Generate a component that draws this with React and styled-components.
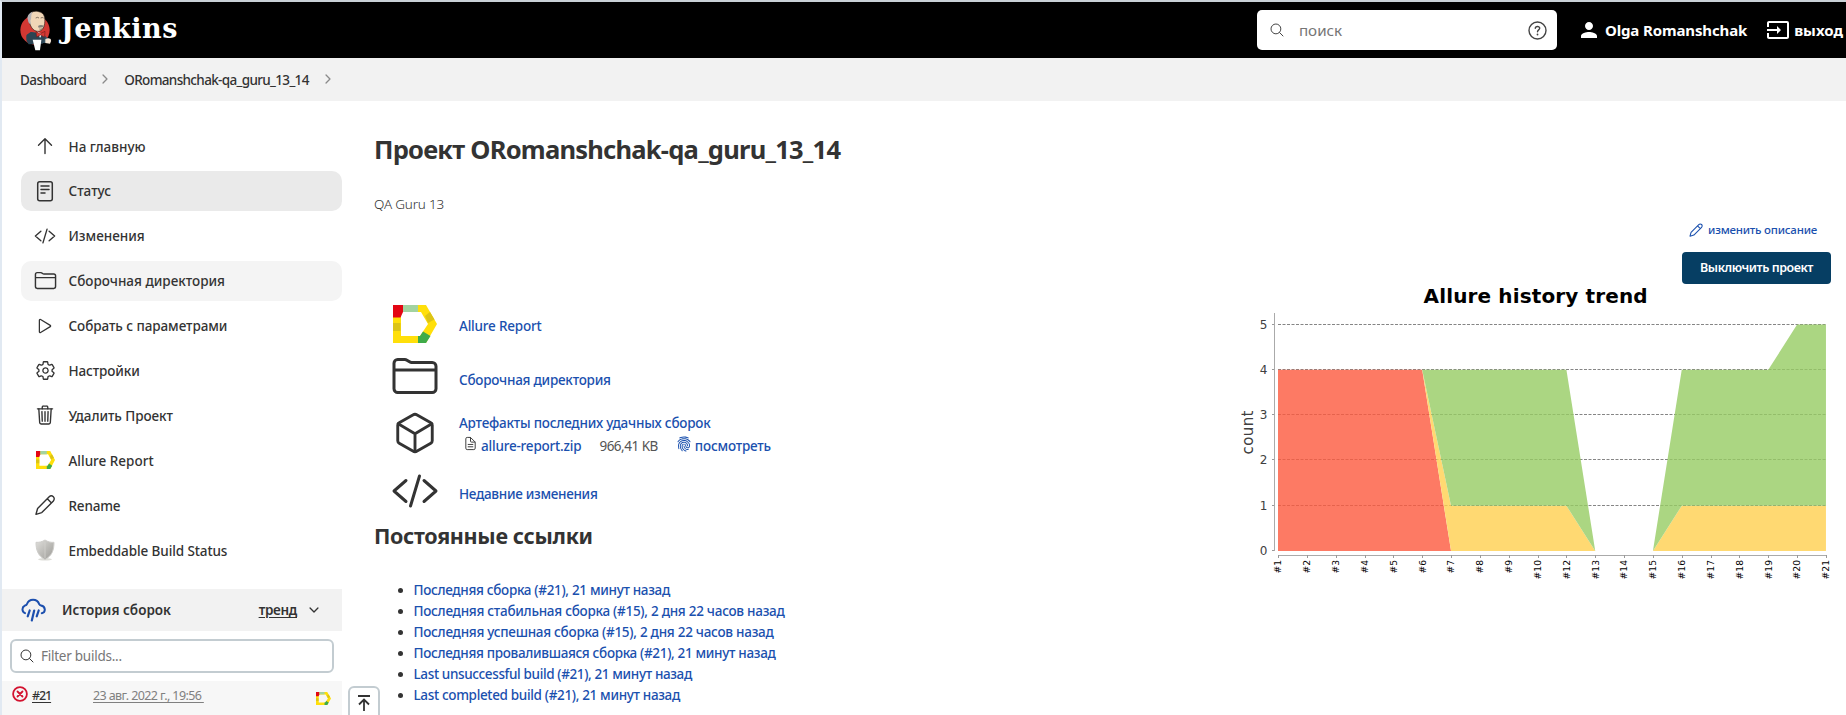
import React from 'react';
import styled, { createGlobalStyle } from 'styled-components';
import {
  IoCodeSlashOutline, IoFolderOutline, IoPlayOutline, IoSettingsOutline,
  IoTrashOutline, IoCubeOutline, IoFingerPrint, IoDocumentTextOutline,
  IoSearchOutline, IoChevronForwardOutline, IoChevronDownOutline,
} from 'react-icons/io5';
import { MdPerson, MdInput } from 'react-icons/md';

const GlobalStyle = createGlobalStyle`
  *, *::before, *::after { box-sizing: border-box; }
  body { margin: 0; background: #fff; }
`;

const Page = styled.div`
  height: 715px;
  overflow: hidden;
  border-top: 2px solid #c9d0d6;
  border-left: 2px solid #e1e9f2;
  background: #fff;
  color: #333;
  font: 470 13.5px/20px "Noto Sans", "Open Sans", sans-serif;
  white-space: nowrap;
  svg { display: block; flex: none; }
`;

const Header = styled.header`
  height: 56px;
  display: flex;
  align-items: center;
  background: #000;
  color: #fff;
`;
const Brand = styled.a`
  display: flex;
  align-items: center;
  margin-left: 18px;
  gap: 9px;
`;
const BrandName = styled.span`
  font: 700 27px/40px "DejaVu Serif", serif;
  letter-spacing: 0.5px;
  margin-top: -2px;
`;
const SearchBox = styled.div`
  display: flex;
  align-items: center;
  width: 300px;
  height: 40px;
  margin-left: auto;
  padding: 0 10px 0 12px;
  border-radius: 5px;
  background: #fff;
  color: #444;
`;
const SearchHint = styled.span`
  margin: 0 auto 0 14px;
  color: #757575;
  font-size: 15.2px;
  font-weight: 400;
`;
const AccountLink = styled.a`
  display: flex;
  align-items: center;
  gap: ${(p) => p.$gap}px;
  margin-left: ${(p) => p.$left}px;
  font-size: 15px;
  font-weight: 700;
  letter-spacing: ${(p) => p.$track || 0}px;
  &:last-child { margin-right: 3px; }
`;

const Breadcrumbs = styled.nav`
  display: flex;
  align-items: center;
  height: 43px;
  padding: 1px 0 0 18px;
  background: #f2f2f2;
  color: #333;
  svg { color: #8a8a8a; margin: -3px 0 0; }
`;
const Crumb = styled.a`
  letter-spacing: ${(p) => p.$track}px;
  margin-right: 12px;
  svg + & { margin-left: 12px; }
`;

const Columns = styled.div`
  display: flex;
  align-items: flex-start;
`;
const Sidebar = styled.aside`
  width: 340px;
  flex: none;
  padding-top: 25px;
`;
const Tasks = styled.div`
  display: flex;
  flex-direction: column;
  gap: 4.9px;
  padding-left: 19px;
  height: 463px;
`;
const Task = styled.a`
  display: flex;
  align-items: center;
  height: 40px;
  flex: none;
  padding-left: 14px;
  gap: 13.5px;
  border-radius: 10px;
  background: ${(p) => p.$bg || 'transparent'};
  letter-spacing: ${(p) => p.$track || 0}px;
  span { padding-top: 1px; }
`;
const IconSlot = styled.i`
  display: flex;
  justify-content: center;
  width: 20px;
`;
const HistoryHeader = styled.div`
  display: flex;
  align-items: center;
  height: 42px;
  padding: 0 21px 0 19px;
  background: #f2f2f2;
  font-weight: 650;
  svg:first-child { margin-right: 16px; }
`;
const TrendLink = styled.a`
  margin: 0 10px 0 auto;
  letter-spacing: -0.3px;
  text-decoration: underline;
  text-underline-offset: 2px;
`;
const Filter = styled.div`
  display: flex;
  align-items: center;
  gap: 6px;
  height: 34px;
  margin: 8px 8px 8px;
  padding-left: 7px;
  border: 2px solid #c3ccd1;
  border-radius: 6px;
`;
const FilterHint = styled.span`
  color: #777;
  font-weight: 400;
  letter-spacing: -0.25px;
`;
const Build = styled.div`
  display: flex;
  align-items: flex-start;
  height: 36px;
  padding: 5px 0 0 10px;
  background: #f7f7f7;
  font-size: 12.5px;
  svg:last-child { margin: 6px 11px 0 auto; }
`;
const BuildNumber = styled.a`
  width: 61px;
  line-height: 20px;
  margin: 0 0 0 4px;
  letter-spacing: -1.1px;
  text-decoration: underline;
  text-underline-offset: 2px;
`;
const BuildDate = styled(BuildNumber)`
  width: auto;
  margin-left: 0;
  color: #808080;
  font-weight: 400;
  letter-spacing: -0.62px;
`;

const TopButton = styled.button`
  display: flex;
  justify-content: center;
  width: 32px;
  height: 40px;
  flex: none;
  margin: 585px 0 0 6px;
  padding: 6px 0 0;
  border: 2px solid #c3ccd1;
  border-radius: 6px;
  background: #fff;
  color: #333;
`;

const Main = styled.main`
  flex: 1;
  margin-left: -6px;
  padding: 28px 13px 0 0;
`;
const Title = styled.h1`
  margin: 0;
  font-size: 25.5px;
  font-weight: 680;
  line-height: 40px;
  letter-spacing: -0.76px;
`;
const Description = styled.div`
  margin-top: 25px;
  font-weight: 350;
  letter-spacing: -0.2px;
`;
const EditRow = styled.div`
  display: flex;
  justify-content: flex-end;
  align-items: center;
  gap: 4px;
  height: 20px;
  margin: 6px 16px 12px 0;
  color: #1a50ae;
  font-size: 11.5px;
  letter-spacing: -0.22px;
`;
const Body = styled.div`
  display: flex;
  justify-content: space-between;
  align-items: flex-start;
`;
const Overview = styled.div`
  padding-top: 48px;
`;
const Entry = styled.div`
  display: flex;
  align-items: center;
  height: ${(p) => p.$height}px;
  padding-left: 18px;
  gap: 21px;
`;
const EntryIcon = styled.div`
  display: flex;
  justify-content: center;
  width: 46px;
  margin-top: -2px;
`;
const EntryText = styled.div`
  padding-top: ${(p) => p.$drop || 0}px;
  letter-spacing: ${(p) => p.$track || 0}px;
`;
const Link = styled.a`
  color: #1a50ae;
  font-weight: 500;
  letter-spacing: ${(p) => (p.$track === undefined ? 'inherit' : `${p.$track}px`)};
`;
const Artifact = styled.div`
  display: flex;
  align-items: center;
  height: 23px;
  padding: 3px 0 0 4px;
  svg { margin: -4px 3px 0 0; }
`;
const FileSize = styled.span`
  margin: 0 18px;
  color: #555;
  font-weight: 380;
  letter-spacing: -0.5px;
`;
const Subtitle = styled.h2`
  margin: 0;
  font-size: 21.5px;
  font-weight: 680;
  line-height: 32px;
  letter-spacing: -0.33px;
`;
const Permalinks = styled.ul`
  margin: 28px 0 0;
  padding-left: 39.5px;
  line-height: 21px;
`;

const Aside = styled.div`
  display: flex;
  flex-direction: column;
  align-items: flex-end;
`;
const PrimaryButton = styled.button`
  width: 149px;
  height: 32px;
  margin-right: 2px;
  padding: 0;
  border: 0;
  border-radius: 4px;
  background: #063e63;
  color: #fff;
  font: 650 12.5px/32px "Noto Sans", sans-serif;
  letter-spacing: -0.45px;
`;
const Chart = styled.svg`
  width: 600px;
  height: 310px;
  margin: -1px -7px 0 0;
  font-family: "DejaVu Sans", sans-serif;
`;

const AllureLogo = ({ width, height }) => (
  <svg width={width} height={height} viewBox="0 0 44 38" preserveAspectRatio="none">
    <path fill="#ffdf0a" d="M0 0H33L44 19 33 38H0ZM8 7V31H27L35 19 28 7Z" fillRule="evenodd" />
    <path fill="#e30613" d="M0 0H10V7L7.5 12.5H0Z" />
    <path fill="#a3d3a0" d="M10 0H25V7H10Z" />
    <path fill="#dcc416" d="M32 11 37 7 41.5 14.500 35 18ZM0 18H7.500V26H0Z" />
    <path fill="#3fab49" d="M25 38V31L27 31 30 26.500 37.500 31 33 38Z" />
  </svg>
);

const UpIcon = () => (
  <svg width="20" height="20" viewBox="0 0 20 20" fill="none" stroke="#333" strokeWidth="1.400" strokeLinecap="round" strokeLinejoin="round">
    <path d="M10 17.500V3M3.500 9.200 10 2.700 16.500 9.200" />
  </svg>
);

const StatusIcon = () => (
  <svg width="24" height="24" viewBox="0 0 24 24" fill="none" stroke="#333" strokeWidth="1.5" strokeLinecap="round">
    <rect x="4.700" y="2.700" width="14.600" height="19" rx="2" />
    <path d="M8 7h8M8 10.500h8M8 14h4" />
  </svg>
);

const PencilIcon = ({ size, color = '#333', weight = 1.4 }) => (
  <svg width={size} height={size} viewBox="0 0 24 24" fill="none" stroke={color} strokeWidth={weight} strokeLinejoin="round">
    <path d="M3 21.300 4.600 15.500 16.200 3.800A2.900 2.900 0 0 1 20.400 7.900L8.800 19.600ZM14.300 5.700l4.200 4.200" />
  </svg>
);

const RainIcon = () => (
  <svg width="25" height="25" viewBox="0 0 25 25" fill="none" stroke="#1c4fae" strokeWidth="2" strokeLinecap="round">
    <path d="M4 15.200A4.200 4.200 0 0 1 3.800 7.600C5 7.300 5.600 7.200 6 6 8 .6 16 .2 18.300 6.300 18.600 7.200 19 7.400 20 7.500 24.800 8.300 25 14.300 20.800 15.200" />
    <path d="M8.700 12.500 6.700 18.300M13.200 12.500 10.800 22.500M17.700 12.500 15.700 18.300" strokeWidth="2.200" />
  </svg>
);

const ShieldIcon = () => (
  <svg width="24" height="24" viewBox="0 0 24 24">
    <defs>
      <linearGradient id="metal" x1="0" x2="1" y1="0" y2="1">
        <stop offset="0" stopColor="#e0dfdc" />
        <stop offset="0.5" stopColor="#bdbcb8" />
        <stop offset="1" stopColor="#9b9a96" />
      </linearGradient>
    </defs>
    <ellipse cx="12" cy="21.300" rx="7" ry="1.200" fill="#deded9" />
    <path d="M12 2C9 4 6 4.500 3 4.300 3 12 5 18 12 21.500 19 18 21 12 21 4.300 18 4.500 15 4 12 2Z" fill="url(#metal)" stroke="#cfcecb" />
    <path d="M12 4V20" stroke="#d3d2ce" strokeWidth="0.800" />
  </svg>
);

const Butler = () => (
  <svg width="32" height="43" viewBox="30 25 96 129">
    <ellipse cx="75" cy="88" rx="44" ry="44" fill="#d33833" />
    <path d="M50 103 64 94 100 100 112 112 120 116 114 126 90 128 64 130 50 122Z" fill="#335061" />
    <path d="M50 103Q46 118 56 131L98 129 104 112 84 98 62 94Z" fill="#2c4453" />
    <path d="M56 56C54 36 72 28 86 33 104 36 106 52 104 68 102 84 94 92 84 92 68 92 60 76 56 56Z" fill="#f0d6b7" stroke="#30251f" strokeWidth="2" />
    <path d="M54 58C49 48 57 36 68 33 61 44 66 52 61 60L63 70C57 70 54 64 54 58Z" fill="#b5b3b6" />
    <path d="M77 52q6-4 10 0M92 52q5-3 9 0M88 85q5 2 9-1" fill="none" stroke="#4d4138" strokeWidth="2" />
    <path d="M84 76q8-6 19 0l-5 4-12 1Z" fill="#85827c" />
    <path d="M82 92 96 101 90 112Z" fill="#fff" />
    <path d="M78 93 91 99 105 92 104 110 92 103 80 109Z" fill="#d33833" stroke="#5d1715" strokeWidth="1.500" />
    <path d="M68 117 94 117 90 149 76 149Z" fill="#fff" />
    <path d="M106 116q8-6 16-1 4 6-2 14l-14-2Z" fill="#f4e4d3" />
  </svg>
);

const HelpIcon = () => (
  <svg width="19" height="19" viewBox="0 0 19 19" fill="none" stroke="#444" strokeWidth="1.400" strokeLinecap="round">
    <circle cx="9.500" cy="9.500" r="8.500" />
    <path d="M7.300 7.300C7.400 4.800 11.800 4.900 11.700 7.300 11.600 8.900 9.500 8.900 9.500 10.800" />
    <path d="M9.500 13.500v.1" strokeWidth="1.800" />
  </svg>
);

const FailedIcon = () => (
  <svg width="16" height="16" viewBox="0 0 16 16" fill="none" stroke="#d3122f" strokeWidth="1.800" strokeLinecap="round">
    <circle cx="8" cy="8" r="6.900" />
    <path d="M5.500 5.500l5 5M10.500 5.500l-5 5" />
  </svg>
);

const ToTopIcon = () => (
  <svg width="14" height="18" viewBox="0 0 14 18" fill="none" stroke="currentColor" strokeWidth="1.800">
    <path d="M1 2H13M7 17V5.500M2 10.500 7 5.500 12 10.500" />
  </svg>
);

const TASKS = [
  { icon: <UpIcon />, text: 'На главную' },
  { icon: <StatusIcon />, text: 'Статус', bg: '#eaeaea' },
  { icon: <IoCodeSlashOutline size={22} />, text: 'Изменения' },
  { icon: <IoFolderOutline size={23} />, text: 'Сборочная директория', bg: '#f4f4f4' },
  { icon: <IoPlayOutline size={20} />, text: 'Собрать с параметрами', track: -0.07 },
  { icon: <IoSettingsOutline size={21} />, text: 'Настройки', track: -0.1 },
  { icon: <IoTrashOutline size={22} />, text: 'Удалить Проект', track: -0.07 },
  { icon: <AllureLogo width={19} height={18} />, text: 'Allure Report' },
  { icon: <PencilIcon size={24} />, text: 'Rename', track: -0.2 },
  { icon: <ShieldIcon />, text: 'Embeddable Build Status', track: -0.1 },
];

const PERMALINKS = [
  ['Последняя сборка (#21), 21 минут назад', -0.32],
  ['Последняя стабильная сборка (#15), 2 дня 22 часов назад', -0.27],
  ['Последняя успешная сборка (#15), 2 дня 22 часов назад', -0.27],
  ['Последняя провалившаяся сборка (#21), 21 минут назад', -0.33],
  ['Last unsuccessful build (#21), 21 минут назад', -0.37],
  ['Last completed build (#21), 21 минут назад', -0.34],
];

const BUILDS = [1, 2, 3, 4, 5, 6, 7, 8, 9, 10, 12, 13, 14, 15, 16, 17, 18, 19, 20, 21];
const chartX = (i) => 38 + i * 28.84;
const chartY = (v) => 268 - v * 45.3;
const area = (points) => points.map(([i, v]) => `${chartX(i)},${chartY(v)}`).join(' ');

const TrendChart = () => (
  <Chart viewBox="0 0 600 310">
    <text x="295.600" y="20" fontSize="20" fontWeight="700" textAnchor="middle" textLength="224">Allure history trend</text>
    {[0, 1, 2, 3, 4, 5].map((v) => (
      <g key={v}>
        {v > 0 && <path d={`M38 ${Math.round(chartY(v)) - 0.5}H586`} stroke="#858585" strokeDasharray="3 1.500" />}
        <path d={`M32 ${Math.round(chartY(v)) - 0.5}h3`} stroke="#999" />
        <text x="27.500" y={chartY(v) + 4} fontSize="12" fill="#404040" textAnchor="end">{v}</text>
      </g>
    ))}
    <g opacity="0.8">
      <polygon fill="#fd5a3e" points={area([[0, 0], [0, 4], [5, 4], [6, 0]])} />
      <polygon fill="#ffd050" points={area([[5, 4], [6, 1], [10, 1], [11, 0], [6, 0]])} />
      <polygon fill="#ffd050" points={area([[13, 0], [14, 1], [19, 1], [19, 0]])} />
      <polygon fill="#97cc64" points={area([[5, 4], [10, 4], [11, 0], [10, 1], [6, 1]])} />
      <polygon fill="#97cc64" points={area([[13, 0], [14, 4], [17, 4], [18, 5], [19, 5], [19, 1], [14, 1]])} />
    </g>
    <path d="M34.500 30V268M38 272.500H586.500" stroke="#aaa" fill="none" />
    {BUILDS.map((n, i) => (
      <g key={n}>
        <path d={`M${Math.round(chartX(i)) + 0.5} 272v3`} stroke="#999" />
        <text transform={`translate(${chartX(i) + 3.3} 277) rotate(-90)`} fontSize="9.200" textAnchor="end">#{n}</text>
      </g>
    ))}
    <text transform="translate(12.500 149.500) rotate(-90)" fontSize="15" fill="#404040" textAnchor="middle" textLength="44">count</text>
  </Chart>
);

export default function App() {
  return (
    <Page>
      <GlobalStyle />
      <Header>
        <Brand><Butler /><BrandName>Jenkins</BrandName></Brand>
        <SearchBox>
          <IoSearchOutline size={16} />
          <SearchHint>поиск</SearchHint>
          <HelpIcon />
        </SearchBox>
        <AccountLink $left={20} $gap={4} $track={-0.13}><MdPerson size={24} />Olga Romanshchak</AccountLink>
        <AccountLink $left={19} $gap={4}><MdInput size={24} />выход</AccountLink>
      </Header>
      <Breadcrumbs>
        <Crumb $track={-0.5}>Dashboard</Crumb>
        <IoChevronForwardOutline size={14} />
        <Crumb $track={-0.66}>ORomanshchak-qa_guru_13_14</Crumb>
        <IoChevronForwardOutline size={14} />
      </Breadcrumbs>
      <Columns>
        <Sidebar>
          <Tasks>
            {TASKS.map((t) => (
              <Task key={t.text} $bg={t.bg} $track={t.track}><IconSlot>{t.icon}</IconSlot><span>{t.text}</span></Task>
            ))}
          </Tasks>
          <HistoryHeader>
            <RainIcon />
            История сборок
            <TrendLink>тренд</TrendLink>
            <IoChevronDownOutline size={14} />
          </HistoryHeader>
          <Filter><IoSearchOutline size={16} /><FilterHint>Filter builds...</FilterHint></Filter>
          <Build>
            <FailedIcon />
            <BuildNumber>#21</BuildNumber>
            <BuildDate>23 авг. 2022 г., 19:56&nbsp;</BuildDate>
            <AllureLogo width={15} height={13} />
          </Build>
        </Sidebar>
        <TopButton><ToTopIcon /></TopButton>
        <Main>
          <Title>Проект ORomanshchak-qa_guru_13_14</Title>
          <Description>QA Guru 13</Description>
          <EditRow><PencilIcon size={16} color="#1a50ae" weight={1.6} />изменить описание</EditRow>
          <Body>
            <Overview>
              <Entry $height={50}>
                <EntryIcon><AllureLogo width={44} height={38} /></EntryIcon>
                <EntryText $drop={2} $track={-0.2}><Link>Allure Report</Link></EntryText>
              </Entry>
              <Entry $height={54}>
                <EntryIcon><IoFolderOutline size={48} /></EntryIcon>
                <EntryText $drop={6} $track={-0.24}><Link>Сборочная директория</Link></EntryText>
              </Entry>
              <Entry $height={60}>
                <EntryIcon><IoCubeOutline size={46} /></EntryIcon>
                <EntryText>
                  <Link $track={-0.22}>Артефакты последних удачных сборок</Link>
                  <Artifact>
                    <IoDocumentTextOutline size={15} />
                    <Link $track={-0.2}>allure-report.zip</Link>
                    <FileSize>966,41 KB</FileSize>
                    <IoFingerPrint size={16} color="#1a50ae" />
                    <Link $track={-0.2}>посмотреть</Link>
                  </Artifact>
                </EntryText>
              </Entry>
              <Entry $height={56}>
                <EntryIcon><IoCodeSlashOutline size={48} /></EntryIcon>
                <EntryText $drop={4} $track={-0.3}><Link>Недавние изменения</Link></EntryText>
              </Entry>
              <Subtitle>Постоянные ссылки</Subtitle>
              <Permalinks>
                {PERMALINKS.map(([text, track]) => <li key={text}><Link $track={track}>{text}</Link></li>)}
              </Permalinks>
            </Overview>
            <Aside>
              <PrimaryButton>Выключить проект</PrimaryButton>
              <TrendChart />
            </Aside>
          </Body>
        </Main>
      </Columns>
    </Page>
  );
}
